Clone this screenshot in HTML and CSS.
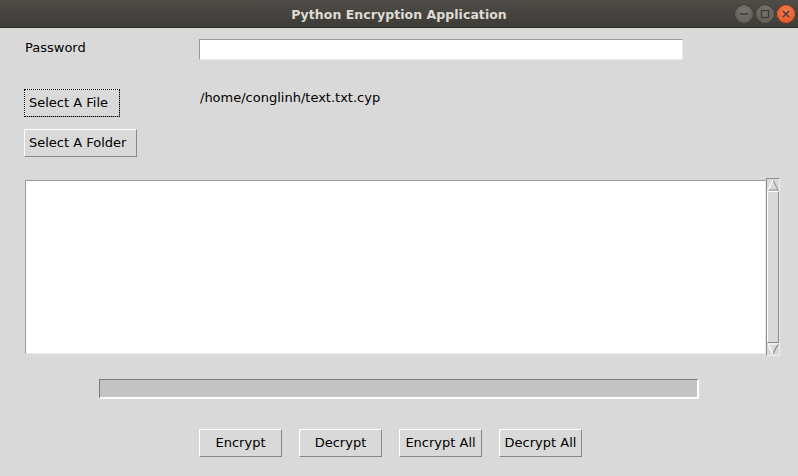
FILE: index.html
```html
<!DOCTYPE html>
<html>
<head>
<meta charset="utf-8">
<link rel="stylesheet" href="styles.css">
</head>
<body>
<div class="window">
  <div class="titlebar">
    <div class="title">Python Encryption Application</div>
    <div class="controls">
      <span class="wbtn min"><svg width="20" height="20" viewBox="0 0 20 20"><line x1="6" y1="10" x2="14" y2="10" stroke="#3c3b37" stroke-width="1.4"/></svg></span>
      <span class="wbtn max"><svg width="20" height="20" viewBox="0 0 20 20"><rect x="6.5" y="6.5" width="7" height="7" fill="none" stroke="#3c3b37" stroke-width="1.3"/></svg></span>
      <span class="wbtn close"><svg width="20" height="20" viewBox="0 0 20 20"><path d="M7 7 L13 13 M13 7 L7 13" stroke="#3c3b37" stroke-width="1.4"/></svg></span>
    </div>
  </div>
  <div class="content">
    <div class="row pw-row">
      <span class="label pw-label">Password</span>
      <span class="entry"></span>
    </div>
    <div class="row file-row">
      <button class="tkbtn left focus">Select A File</button>
      <span class="path">/home/conglinh/text.txt.cyp</span>
    </div>
    <div class="row folder-row">
      <button class="tkbtn left">Select A Folder</button>
    </div>
    <div class="text-wrap">
      <div class="textbox"></div>
      <div class="scrollbar">
        <div class="arrow up"><svg width="12" height="12" viewBox="0 0 12 12"><path d="M6 1 L11 11 L1 11 Z" fill="#d9d9d9" stroke="none"/><path d="M6 1 L11 11 L1 11" fill="none" stroke="#8a8a8a" stroke-width="1"/><path d="M1 11 L6 1" stroke="#ffffff" stroke-width="1.2"/></svg></div>
        <div class="slider"></div>
        <div class="arrow down"><svg width="12" height="12" viewBox="0 0 12 12"><path d="M1 1 L11 1 L6 11 Z" fill="#d9d9d9"/><path d="M11 1 L6 11" stroke="#8a8a8a" stroke-width="1.2"/><path d="M1 1 L6 11" stroke="#ffffff" stroke-width="1.2"/><path d="M1 1 L11 1" stroke="#ffffff" stroke-width="1"/></svg></div>
      </div>
    </div>
    <div class="progress"></div>
    <div class="actions">
      <button class="tkbtn act">Encrypt</button>
      <button class="tkbtn act">Decrypt</button>
      <button class="tkbtn act">Encrypt All</button>
      <button class="tkbtn act">Decrypt All</button>
    </div>
  </div>
</div>
</body>
</html>
```

FILE: styles.css
```css
* { box-sizing: border-box; }
html, body { margin: 0; padding: 0; }
body {
  width: 798px;
  height: 476px;
  overflow: hidden;
  background: #d9d9d9;
  font-family: "DejaVu Sans", sans-serif;
  font-size: 13px;
  color: #000;
}
.window { width: 798px; height: 476px; display: flex; flex-direction: column; }
.titlebar {
  height: 28px;
  flex: none;
  background: linear-gradient(#4f4d48, #3d3c38);
  position: relative;
  display: flex;
  align-items: center;
  justify-content: center;
  border-bottom: 1px solid #2f2e2b;
}
.title {
  color: #dfdbd2;
  font-family: "DejaVu Sans", sans-serif;
  font-weight: bold;
  font-size: 12.5px;
  letter-spacing: 0.05px;
  padding-top: 1px;
}
.controls {
  position: absolute;
  right: 2px;
  top: 4px;
  display: flex;
  gap: 1px;
}
.wbtn {
  width: 20px;
  height: 20px;
  border-radius: 50%;
  display: flex;
  align-items: center;
  justify-content: center;
  background: radial-gradient(circle at 50% 35%, #77756f, #58574f);
  box-shadow: inset 0 0 0 1px #3a3935;
}
.wbtn.close { background: radial-gradient(circle at 50% 35%, #f27a4d, #df4c1c); }
.content { padding: 11px 0 0 24px; }
.row { display: flex; }
.pw-row { height: 21px; align-items: flex-start; }
.pw-label { width: 175px; padding-left: 1px; line-height: 16px; margin-top: 1px; }
.entry {
  width: 484px;
  height: 21px;
  background: #fff;
  border: 1px solid;
  border-color: #9a9a9a #e9e9e9 #e9e9e9 #9a9a9a;
}
.file-row { margin-top: 29px; align-items: flex-start; }
.tkbtn {
  font-family: "DejaVu Sans", sans-serif;
  font-size: 13px;
  color: #000;
  background: #d9d9d9;
  border: 1px solid;
  border-color: #ffffff #878787 #878787 #ffffff;
  height: 28px;
  padding: 0 4px;
  margin: 0;
  line-height: 16px;
}
.tkbtn.left { text-align: left; padding-left: 4px; }
.tkbtn.focus {
  width: 96px;
  outline: 1px dotted #000;
  outline-offset: -1px;
}
.path { margin-left: 80px; line-height: 16px; margin-top: 1px; }
.folder-row { margin-top: 12px; }
.folder-row .tkbtn { width: 113px; }
.text-wrap { margin-top: 21px; display: flex; align-items: flex-start; }
.textbox {
  margin-left: 1px;
  margin-top: 2px;
  width: 741px;
  height: 174px;
  background: #fff;
  border: 1px solid;
  border-color: #9a9a9a #e9e9e9 #e9e9e9 #9a9a9a;
}
.scrollbar {
  width: 14px;
  height: 178px;
  border: 1px solid;
  border-color: #8f8f8f #ececec #ececec #8f8f8f;
  background: #c3c3c3;
  display: flex;
  flex-direction: column;
}
.arrow { width: 12px; height: 12px; flex: none; background: #d9d9d9; }
.arrow svg { display: block; }
.slider {
  flex: 1;
  background: #d9d9d9;
  border: 1px solid;
  border-color: #ffffff #8a8a8a #8a8a8a #ffffff;
}
.progress {
  margin-top: 23px;
  margin-left: 75px;
  width: 600px;
  height: 20px;
  background: #c3c3c3;
  border: 1px solid;
  border-color: #7b7b7b #ffffff #ffffff #7b7b7b;
  border-width: 1px 2px 2px 1px;
}
.actions { margin-top: 30px; margin-left: 175px; display: flex; gap: 17px; }
.tkbtn.act { width: 83px; padding: 0; }
```
